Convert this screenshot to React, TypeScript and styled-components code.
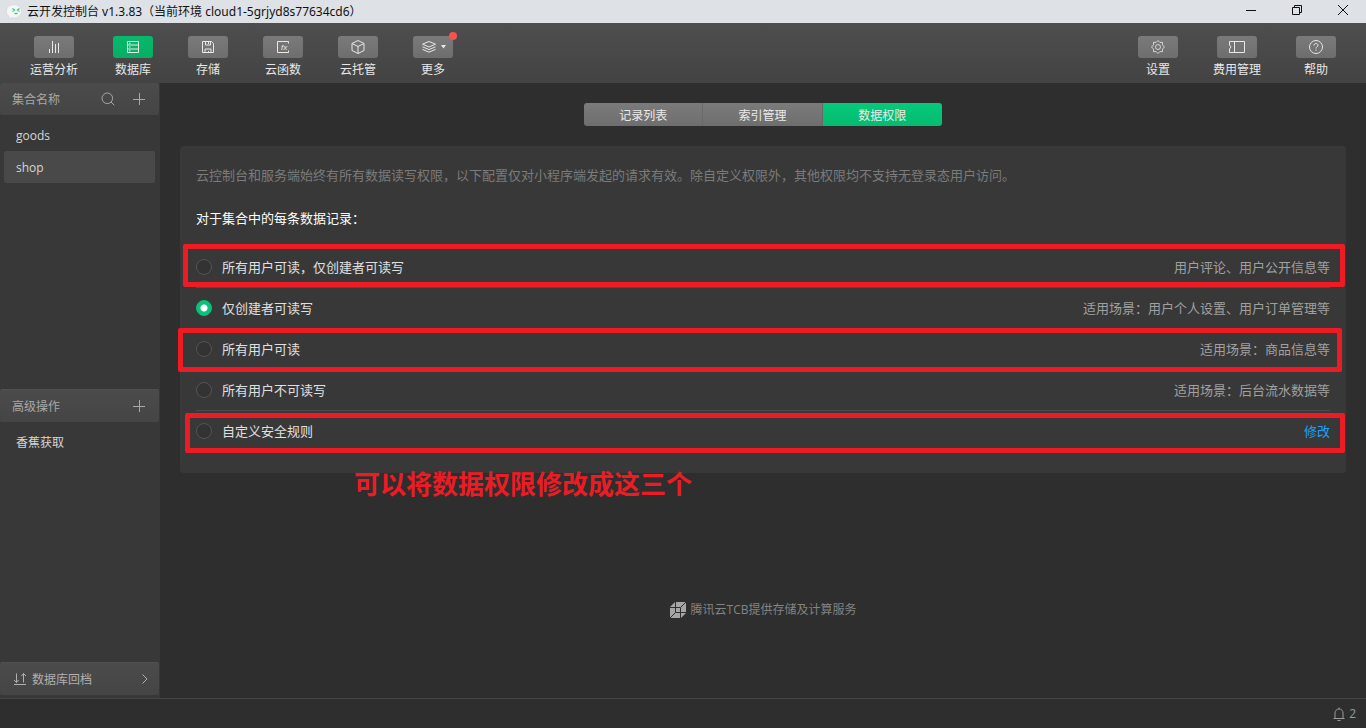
import React, { useState } from "react";
import styled, { createGlobalStyle, css } from "styled-components";

const GlobalStyle = createGlobalStyle`
  *, *::before, *::after { box-sizing: border-box; }
  body {
    margin: 0;
    background: #2e2e2e;
    color: #d8d8d8;
    font-family: "Open Sans", "Noto Sans CJK SC", sans-serif;
    font-size: 12px;
    line-height: 16px;
  }
  button {
    border: 0;
    padding: 0;
    background: none;
    color: inherit;
    font: inherit;
    cursor: pointer;
  }
  h1, h2, p, ul { margin: 0; padding: 0; font-size: inherit; font-weight: 400; }
  ul { list-style: none; }
  svg { display: block; flex: none; }
`;

const Shell = styled.div`
  display: flex;
  flex-direction: column;
  min-height: 100vh;
`;

/* Window title bar */

const TitleBar = styled.header`
  display: flex;
  align-items: center;
  gap: 4px;
  height: 23px;
  padding: 0 18px 0 6px;
  background: #dee1e6;
  color: #111;
`;

const WindowTitle = styled.h1`
  flex: 1;
  font-family: "Noto Sans", "Noto Sans CJK SC", sans-serif;
  white-space: nowrap;
`;

const WindowControls = styled.div`
  display: flex;
  gap: 36px;
  padding-bottom: 3px;
`;

/* Toolbar */

const Toolbar = styled.nav`
  display: flex;
  justify-content: space-between;
  height: 60px;
  padding: 13px 30px 0;
  background: linear-gradient(#4e4e4e, #434343);
`;

const ToolGroup = styled.div`
  display: flex;
  align-items: flex-start;
  gap: 35px;
`;

const ToolButton = styled.button`
  display: flex;
  flex-direction: column;
  align-items: center;
  gap: 4px;
  min-width: 40px;
  color: #e8e8e8;
  white-space: nowrap;
`;

const ToolFace = styled.span<{ $active?: boolean }>`
  position: relative;
  display: flex;
  align-items: center;
  justify-content: center;
  gap: 4px;
  width: 40px;
  height: 22px;
  border-radius: 3px;
  background: ${(p) =>
    p.$active ? "linear-gradient(#07b96b, #07ae63)" : "linear-gradient(#7a7a7a, #6e6e6e)"};
`;

const Dot = styled.span`
  position: absolute;
  top: -4px;
  right: -4px;
  width: 8px;
  height: 8px;
  border-radius: 50%;
  background: #fa5151;
`;

/* Body */

const Body = styled.div`
  display: flex;
  flex: 1;
`;

const Sidebar = styled.aside`
  display: flex;
  flex-direction: column;
  flex: none;
  width: 160px;
  padding: 0 1px 3px 0;
  background: #383838;
`;

const SideSection = styled.section<{ $grow: number }>`
  flex: ${(p) => p.$grow} 0 0;
`;

const sideBar = css`
  display: flex;
  align-items: center;
  width: 100%;
  border-radius: 2px;
  background: linear-gradient(#4b4b4b, #454545);
  color: #a8a8a8;
`;

const SideHeader = styled.div<{ $lined?: boolean }>`
  ${sideBar}
  gap: 17px;
  height: ${(p) => (p.$lined ? 33 : 32)}px;
  padding: 0 13px 0 12px;
  border-top: ${(p) => (p.$lined ? "1px solid #505050" : "0")};
`;

const SideTitle = styled.h2`
  flex: 1;
  padding-top: 2px;
`;

const SideList = styled.ul`
  padding: 4px;
`;

const SideItem = styled.button<{ $active?: boolean }>`
  display: block;
  width: 100%;
  height: 32px;
  padding: 2px 12px 0;
  border-radius: 2px;
  background: ${(p) => (p.$active ? "#494949" : "transparent")};
  color: #d6d6d6;
  text-align: left;
`;

const RollbackButton = styled.button`
  ${sideBar}
  gap: 5px;
  height: 33px;
  padding: 0 10px 0 13px;
  border-top: 1px solid #505050;
  color: #b0b0b0;

  span { flex: 1; padding-top: 2px; text-align: left; }
`;

const Main = styled.main`
  display: flex;
  flex: 1;
  flex-direction: column;
  min-width: 0;
  padding: 20px 20px 80px;
`;

const Tabs = styled.div`
  display: grid;
  grid-template-columns: repeat(3, 1fr);
  align-self: center;
  width: 358px;
  height: 23px;
  border-radius: 3px;
  overflow: hidden;
`;

const Tab = styled.button<{ $active: boolean }>`
  padding-top: 2px;
  border-right: ${(p) => (p.$active ? "0" : "1px solid #696969")};
  color: #ebebeb;
  background: ${(p) =>
    p.$active ? "linear-gradient(#05c97b, #06bb70)" : "linear-gradient(#7b7b7b, #6e6e6e)"};
`;

const Card = styled.section`
  position: relative;
  margin-top: 20px;
  padding: 19px 16px 21px;
  border-radius: 3px;
  background: #383838;
  font-size: 13px;
  line-height: 20px;
`;

const Hint = styled.p`
  color: #7b7b7b;
`;

const Question = styled.h2`
  margin: 23px 0 19px;
  color: #fff;
`;

const Rule = styled.li<{ $last?: boolean }>`
  position: relative;
  display: flex;
  align-items: center;
  justify-content: space-between;
  height: 41px;
  border-bottom: 1px solid ${(p) => (p.$last ? "transparent" : "#4b4b4b")};
`;

const RuleLabel = styled.label`
  display: flex;
  align-items: center;
  gap: 10px;
  color: #e0e0e0;
`;

const Radio = styled.input`
  appearance: none;
  width: 16px;
  height: 16px;
  margin: 0;
  border: 1px solid #535353;
  border-radius: 50%;
  background: #333;

  &:checked {
    border-color: #07c47a;
    background: radial-gradient(circle, #fff 0 3px, #07c47a 4px);
  }
`;

const Scenario = styled.span`
  color: #a0a0a0;
`;

const EditLink = styled.a`
  color: #1aa3f8;
  text-decoration: none;
`;

/* Red marker frame drawn over a rule */
const Mark = styled.span<{ $inset: string }>`
  position: absolute;
  z-index: 1;
  inset: ${(p) => p.$inset};
  border: 5px solid #ed1c24;
  border-radius: 2px;
  pointer-events: none;
`;

const MarkNote = styled.p`
  position: absolute;
  top: 320px;
  left: 174px;
  color: #ed1c24;
  font-size: 26px;
  font-weight: 700;
  line-height: 36px;
  white-space: nowrap;
`;

const Provider = styled.p`
  display: flex;
  align-items: center;
  justify-content: center;
  gap: 5px;
  margin-top: auto;
  color: #838383;
`;

const StatusBar = styled.footer`
  display: flex;
  justify-content: flex-end;
  height: 30px;
  padding: 0 10px;
  border-top: 1px solid #454545;
  color: #9a9a9a;
`;

const NoticeButton = styled.button`
  display: flex;
  align-items: center;
  gap: 4px;
`;

/* Icons */

type IconProps = { width?: number; height?: number; children: React.ReactNode };

const Icon = ({ width = 16, height = 16, children }: IconProps) => (
  <svg
    width={width}
    height={height}
    viewBox={`0 0 ${width} ${height}`}
    fill="none"
    stroke="currentColor"
    strokeWidth="1"
    aria-hidden="true"
  >
    {children}
  </svg>
);

const AppIcon = () => (
  <svg width="17" height="16" viewBox="0 0 17 16" aria-hidden="true">
    <path d="M8 .8c4.200 0 7.600 2.700 7.600 6.500s-3.400 6.500-7.600 6.500c-1 0-2-.1-2.800-.4L2.600 15l.5-2.700C1.400 11.100.5 9.300.5 7.300.500 3.500 3.800.8 8 .8z" fill="#f6f6f6" stroke="#cfd2d4" strokeWidth=".5" />
    <path d="M6.500 4.500l2 1.500-2 1.500M13.500 4.500l-2 1.500 2 1.500M8.500 9.500h3" fill="none" stroke="#3fc48c" strokeWidth="1.300" />
  </svg>
);

const ChartIcon = () => (
  <Icon><path d="M3.500 10v4M6.500 2v12M9.500 5v9M12.500 4v10" /></Icon>
);

const DatabaseIcon = () => (
  <Icon>
    <path d="M2.500 2.500h11v11h-11zM2.500 6h11M2.500 10h11M4 4.300h1.500M4 8h1.500M4 11.800h1.500" />
  </Icon>
);

const SaveIcon = () => (
  <Icon>
    <path d="M2.500 2.500h9l2 2v9h-11zM5.500 2.500v3.500h5v-3.500M8.500 3v2M5 13.500v-3.500h6v3.500M8.500 12v1.500" />
  </Icon>
);

const FunctionIcon = () => (
  <Icon>
    <path d="M13.500 4.500v-2h-11v11h11v-2" />
    <text x="6" y="11" fontFamily="Liberation Sans, sans-serif" fontSize="8" fontStyle="italic" fill="currentColor" stroke="none">fx</text>
  </Icon>
);

const CubeIcon = () => (
  <Icon><path d="M8 1.500l6 3v7l-6 3-6-3v-7zM2 4.500l6 3 6-3M8 7.500v7" /></Icon>
);

const LayersIcon = () => (
  <Icon>
    <path d="M8 2.500l6.500 2.700L8 8 1.500 5.200zM1.500 7.800L8 10.600l6.500-2.800M1.500 10.400L8 13.200l6.500-2.800" />
  </Icon>
);

const CaretIcon = () => (
  <Icon width={5} height={4}><path d="M0 0h5L2.500 3.500z" fill="currentColor" stroke="none" /></Icon>
);

const GearIcon = () => (
  <Icon>
    <path d="M8 1.500l1.800 1.900 2.700-.1v2.600L14.500 8l-2 2.100v2.600l-2.700-.1L8 14.500l-1.800-1.900-2.700.1v-2.600L1.500 8l2-2.100V3.300l2.700.1z" strokeOpacity=".8" />
    <circle cx="8" cy="8" r="2.500" strokeOpacity=".8" />
  </Icon>
);

const TicketIcon = () => (
  <Icon>
    <path d="M.5 2.500h15v11H.5v-3.500L2 8 .5 6zM5.500 2.500v11" />
  </Icon>
);

const HelpIcon = () => (
  <Icon>
    <circle cx="8" cy="8" r="6.500" />
    <path d="M6 6.500c0-1.200.9-2 2-2s2 .8 2 1.800c0 1.400-2 1.500-2 3.200M8 10.500v1.300" />
  </Icon>
);

const SearchIcon = () => (
  <Icon width={14} height={14}>
    <circle cx="6.300" cy="6.300" r="5.300" />
    <path d="M10 10l3.300 3.300" />
  </Icon>
);

const PlusIcon = () => (
  <Icon width={14} height={14}><path d="M7.500 1v12M1 7.500h12" /></Icon>
);

const RollbackIcon = () => (
  <Icon width={14} height={14}>
    <path d="M3.500 1.500v9M1 8l2.500 2.500L5.500 8M10.500 10.500v-9M8.500 4l2-2.500L13 4M1 12.500h12" />
  </Icon>
);

const ChevronIcon = () => (
  <Icon width={8} height={12}><path d="M1.500 1.500L6 6l-4.500 4.500" /></Icon>
);

const BellIcon = () => (
  <Icon width={12} height={14}>
    <path d="M.5 11.500h11M2 11.500V6c0-2.300 1.700-4 4-4s4 1.700 4 4v5.500M6 .5V2M4.500 13.500h3" />
  </Icon>
);

const CloudLogo = () => (
  <svg width="16" height="16" viewBox="0 0 16 16" aria-hidden="true">
    <path d="M5 0h11v11l-5 5H0V5z" fill="#a6a6a6" />
    <path d="M0 5.500h10.500V16M5.500 0v10.500H16M16 0l-5.500 5.500M0 16l5.500-5.500" fill="none" stroke="#2e2e2e" />
  </svg>
);

const MinimizeIcon = () => <Icon width={10} height={10}><path d="M0 5.500h10" /></Icon>;
const RestoreIcon = () => (
  <Icon width={10} height={10}><path d="M.5 2.500h7v7h-7zM2.500 2.500v-2h7v7h-2" /></Icon>
);
const CloseIcon = () => <Icon width={10} height={10}><path d="M0 0l10 10M10 0L0 10" /></Icon>;

/* Data */

const leftTools = [
  { label: "运营分析", icon: <ChartIcon /> },
  { label: "数据库", icon: <DatabaseIcon />, active: true },
  { label: "存储", icon: <SaveIcon /> },
  { label: "云函数", icon: <FunctionIcon /> },
  { label: "云托管", icon: <CubeIcon /> },
  { label: "更多", icon: <><LayersIcon /><CaretIcon /><Dot /></> },
];

const rightTools = [
  { label: "设置", icon: <GearIcon /> },
  { label: "费用管理", icon: <TicketIcon /> },
  { label: "帮助", icon: <HelpIcon /> },
];

const tabs = ["记录列表", "索引管理", "数据权限"];

const rules = [
  { label: "所有用户可读，仅创建者可读写", scenario: "用户评论、用户公开信息等", mark: "-3px -15px 0 -13px" },
  { label: "仅创建者可读写", scenario: "适用场景：用户个人设置、用户订单管理等" },
  { label: "所有用户可读", scenario: "适用场景：商品信息等", mark: "-1px -12px -3px -18px" },
  { label: "所有用户不可读写", scenario: "适用场景：后台流水数据等" },
  { label: "自定义安全规则", mark: "2px -15px -2px -11px" },
];

type Tool = { label: string; icon: React.ReactNode; active?: boolean };

const Tools = ({ items }: { items: Tool[] }) => (
  <ToolGroup>
    {items.map((t) => (
      <ToolButton key={t.label} type="button">
        <ToolFace $active={t.active}>{t.icon}</ToolFace>
        {t.label}
      </ToolButton>
    ))}
  </ToolGroup>
);

export default function App() {
  const [tab, setTab] = useState(2);
  const [rule, setRule] = useState(1);
  const [collection, setCollection] = useState("shop");

  return (
    <Shell lang="zh-CN">
      <GlobalStyle />
      <TitleBar>
        <AppIcon />
        <WindowTitle>云开发控制台 v1.3.83（当前环境 cloud1-5grjyd8s77634cd6）</WindowTitle>
        <WindowControls>
          <button type="button" aria-label="最小化"><MinimizeIcon /></button>
          <button type="button" aria-label="还原"><RestoreIcon /></button>
          <button type="button" aria-label="关闭"><CloseIcon /></button>
        </WindowControls>
      </TitleBar>
      <Toolbar>
        <Tools items={leftTools} />
        <Tools items={rightTools} />
      </Toolbar>
      <Body>
        <Sidebar>
          <SideSection $grow={19}>
            <SideHeader>
              <SideTitle>集合名称</SideTitle>
              <button type="button" aria-label="搜索"><SearchIcon /></button>
              <button type="button" aria-label="新建集合"><PlusIcon /></button>
            </SideHeader>
            <SideList>
              {["goods", "shop"].map((name) => (
                <li key={name}>
                  <SideItem type="button" $active={name === collection} onClick={() => setCollection(name)}>
                    {name}
                  </SideItem>
                </li>
              ))}
            </SideList>
          </SideSection>
          <SideSection $grow={17}>
            <SideHeader $lined>
              <SideTitle>高级操作</SideTitle>
              <button type="button" aria-label="新建操作"><PlusIcon /></button>
            </SideHeader>
            <SideList>
              <li><SideItem type="button">香蕉获取</SideItem></li>
            </SideList>
          </SideSection>
          <RollbackButton type="button">
            <RollbackIcon />
            <span>数据库回档</span>
            <ChevronIcon />
          </RollbackButton>
        </Sidebar>
        <Main>
          <Tabs role="tablist">
            {tabs.map((t, i) => (
              <Tab key={t} type="button" role="tab" aria-selected={i === tab} $active={i === tab} onClick={() => setTab(i)}>
                {t}
              </Tab>
            ))}
          </Tabs>
          <Card>
            <Hint>
              云控制台和服务端始终有所有数据读写权限，以下配置仅对小程序端发起的请求有效。除自定义权限外，其他权限均不支持无登录态用户访问。
            </Hint>
            <Question>对于集合中的每条数据记录：</Question>
            <ul>
              {rules.map((r, i) => (
                <Rule key={r.label} $last={i === rules.length - 1}>
                  <RuleLabel>
                    <Radio type="radio" name="permission" checked={i === rule} onChange={() => setRule(i)} />
                    {r.label}
                  </RuleLabel>
                  {r.scenario ? <Scenario>{r.scenario}</Scenario> : <EditLink href="#edit">修改</EditLink>}
                  {r.mark && <Mark $inset={r.mark} />}
                </Rule>
              ))}
            </ul>
            <MarkNote>可以将数据权限修改成这三个</MarkNote>
          </Card>
          <Provider>
            <CloudLogo />
            腾讯云TCB提供存储及计算服务
          </Provider>
        </Main>
      </Body>
      <StatusBar>
        <NoticeButton type="button" aria-label="通知 2">
          <BellIcon />
          2
        </NoticeButton>
      </StatusBar>
    </Shell>
  );
}
